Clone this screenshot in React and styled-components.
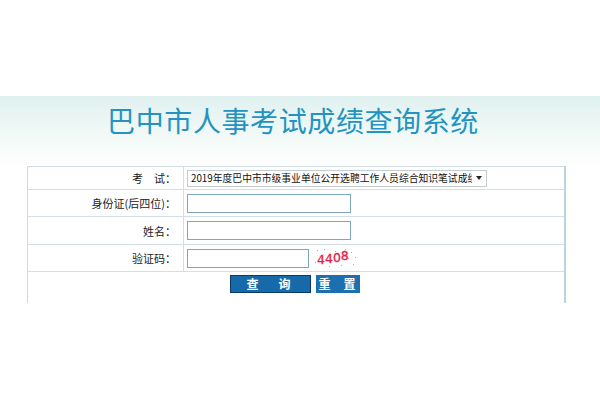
import React from "react";
import styled, { createGlobalStyle } from "styled-components";

const Global = createGlobalStyle`
  html, body { margin: 0; padding: 0; background: #ffffff; }
  body { font-family: "Noto Sans CJK SC", "Noto Sans", sans-serif; color: #222; }
`;

const Page = styled.div`
  width: 600px;
  height: 400px;
  padding-top: 96px;
  box-sizing: border-box;
  overflow: hidden;
`;

const Banner = styled.div`
  height: 70px;
  box-sizing: border-box;
  padding-top: 5px;
  background: linear-gradient(180deg, #e0f1f0 0%, #eef8f6 45%, #f9fcfa 80%, #fdfefd 100%);
  display: flex;
  justify-content: center;
`;

const Title = styled.h1`
  margin: 0;
  font-family: "Noto Sans CJK SC", sans-serif;
  font-weight: 400;
  font-size: 28px;
  line-height: 38px;
  letter-spacing: 0.6px;
  color: #2393c1;
  padding-right: 14px;
`;

const Form = styled.table`
  margin-left: 27px;
  width: 539px;
  border-collapse: collapse;
  border-left: 1px solid #cdd9dd;
  border-right: 2px solid #bcd3dc;
  border-top: 1px solid #d0dde2;
  table-layout: fixed;
`;

const Row = styled.tr`
  height: ${(p) => p.$h}px;
  border-bottom: 1px solid #d3dfe3;
  &:last-child { border-bottom: none; }
`;

const Label = styled.td`
  width: 156px;
  box-sizing: border-box;
  text-align: right;
  padding: 0 7px 0 0;
  font-size: 11px;
  color: #222;
  border-right: 1px solid #d3dfe3;
  white-space: nowrap;
`;

const Field = styled.td`
  padding: 0 0 0 3px;
  font-size: 11px;
`;

const FieldInner = styled.div`
  display: flex;
  align-items: center;
  gap: 6px;
`;

const Select = styled.div`
  width: 300px;
  height: 17px;
  box-sizing: border-box;
  border: 1px solid #c4ccd0;
  background: #fff;
  display: flex;
  align-items: center;
  padding: 0 4px 0 3px;
  font-size: 9.8px;
  color: #111;
  overflow: hidden;
`;

const SelectText = styled.span`
  flex: 1;
  white-space: nowrap;
  overflow: hidden;
`;

const Caret = styled.span`
  width: 0;
  height: 0;
  margin-left: 4px;
  border-left: 3px solid transparent;
  border-right: 3px solid transparent;
  border-top: 4px solid #222;
`;

const Input = styled.input`
  width: ${(p) => p.$w}px;
  height: 19px;
  box-sizing: border-box;
  border: 1px solid #7ea7bf;
  outline: none;
  padding: 0 3px;
  background: #fff;
`;

const Captcha = styled.div`
  position: relative;
  display: flex;
  align-items: flex-end;
  height: 19px;
  padding: 0 10px 0 2px;
  font-family: "DejaVu Sans", sans-serif;
  font-size: 12.5px;
  font-weight: 400;
  color: #e3213f;
  -webkit-text-stroke: 0.3px #e3213f;
`;

const Digit = styled.span`
  display: inline-block;
  transform: translateY(${(p) => p.$dy}px);
`;

const Dot = styled.i`
  position: absolute;
  width: 1px;
  height: 1px;
  background: #f08aa0;
`;

const ButtonCell = styled.td`
  padding-top: 3px;
  vertical-align: top;
`;

const Buttons = styled.div`
  display: flex;
  justify-content: center;
  gap: 5px;
  padding-right: 3px;
`;

const Button = styled.button`
  width: ${(p) => p.$w}px;
  height: 18px;
  box-sizing: border-box;
  padding: ${(p) => p.$pad};
  display: flex;
  align-items: center;
  justify-content: space-between;
  border: 1px solid ${(p) => (p.$dark ? "#0c3a63" : "#1b6fae")};
  background: ${(p) => (p.$dark ? "#176aa9" : "#1d70b0")};
  color: #fff;
  font-family: "Noto Sans CJK SC", sans-serif;
  font-weight: 700;
  font-size: 12px;
  line-height: 16px;
`;

const dots = [
  [2, 1], [9, 0], [20, 2], [30, 0], [36, 3], [40, 8], [0, 13], [14, 17], [26, 16], [38, 15], [33, 9]
];

export default function App() {
  return (
    <>
      <Global />
      <Page>
        <Banner>
          <Title>巴中市人事考试成绩查询系统</Title>
        </Banner>
        <Form>
          <tbody>
            <Row $h={23}>
              <Label>考　试：</Label>
              <Field>
                <Select>
                  <SelectText>2019年度巴中市市级事业单位公开选聘工作人员综合知识笔试成绩</SelectText>
                  <Caret />
                </Select>
              </Field>
            </Row>
            <Row $h={27}>
              <Label>身份证(后四位)：</Label>
              <Field>
                <Input $w={164} />
              </Field>
            </Row>
            <Row $h={28}>
              <Label>姓名：</Label>
              <Field>
                <Input $w={164} />
              </Field>
            </Row>
            <Row $h={27}>
              <Label>验证码：</Label>
              <Field>
                <FieldInner>
                  <Input $w={122} />
                  <Captcha>
                    <Digit $dy={-1}>4</Digit>
                    <Digit $dy={-2}>4</Digit>
                    <Digit $dy={-3}>0</Digit>
                    <Digit $dy={-5}>8</Digit>
                    {dots.map(([x, y], i) => (
                      <Dot key={i} style={{ left: x, top: y }} />
                    ))}
                  </Captcha>
                </FieldInner>
              </Field>
            </Row>
            <Row $h={31}>
              <ButtonCell colSpan={2}>
                <Buttons>
                  <Button $w={81} $dark $pad="0 19px 0 16px">
                    <span>查</span>
                    <span>询</span>
                  </Button>
                  <Button $w={44} $pad="0 3px 0 2px">
                    <span>重</span>
                    <span>置</span>
                  </Button>
                </Buttons>
              </ButtonCell>
            </Row>
          </tbody>
        </Form>
      </Page>
    </>
  );
}
